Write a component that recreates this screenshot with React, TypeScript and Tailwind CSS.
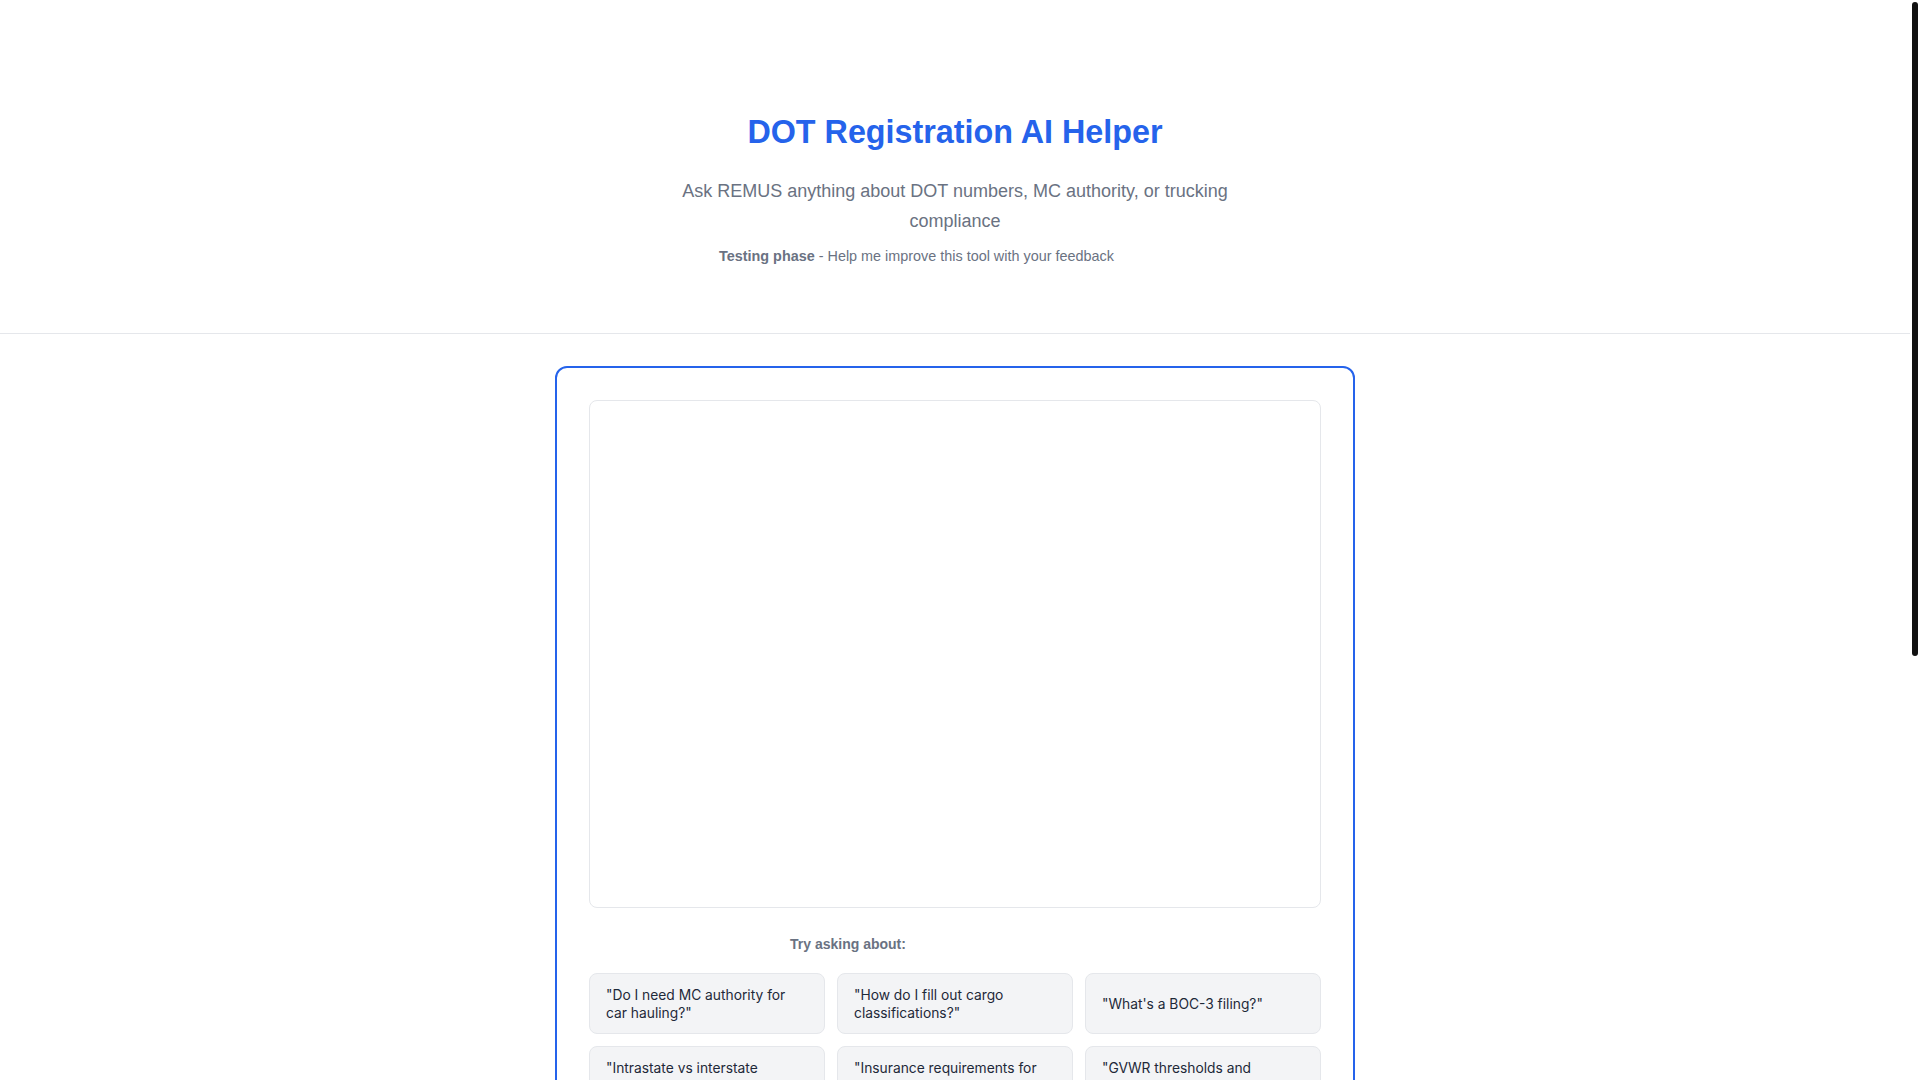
import React from "react";

const suggestions = [
  '"Do I need MC authority for car hauling?"',
  '"How do I fill out cargo classifications?"',
  "\"What's a BOC-3 filing?\"",
  '"Intrastate vs interstate hauling rules?"',
  '"Insurance requirements for car haulers?"',
  '"GVWR thresholds and requirements?"',
];

export default function App() {
  return (
    <div className="relative bg-white font-['Liberation_Sans',Arial,sans-serif]">
      <div className="mr-[10px]">
        <header className="border-b border-gray-200 pt-[112px] pb-[67px] text-center">
          <h1 className="text-[32.3px] leading-[40px] font-bold text-[#2563eb]">
            DOT Registration AI Helper
          </h1>
          <p className="mx-auto mt-[24px] max-w-xl text-lg leading-[30px] text-gray-500">
            Ask REMUS anything about DOT numbers, MC authority, or trucking compliance
          </p>
          <p className="mt-[10px] pl-[719px] text-left text-[0.9rem] leading-5 text-gray-500">
            <span className="font-bold">Testing phase</span> - Help me improve this tool with your feedback
          </p>
        </header>

        <main className="px-4 pt-8 pb-8">
          <div className="mx-auto max-w-[800px] rounded-xl border-2 border-[#2563eb] p-8">
            <div className="h-[508px] rounded-lg border border-gray-200 bg-white" />

            <p className="mt-[26px] pl-[201px] text-sm leading-5 font-bold text-gray-500">
              Try asking about:
            </p>

            <div className="mt-[19px] grid grid-cols-3 gap-3">
              {suggestions.map((s) => (
                <button
                  key={s}
                  type="button"
                  className="flex min-h-[59px] items-center rounded-lg border border-gray-200 bg-gray-100 px-4 pt-[13px] pb-[11px] text-left font-['Inter',sans-serif] text-[13.8px] leading-[17.5px] text-gray-800"
                >
                  {s}
                </button>
              ))}
            </div>

            <form className="mt-6 flex gap-3" onSubmit={(e) => e.preventDefault()}>
              <input
                className="h-[52px] flex-1 rounded-lg border border-gray-300 px-4 font-['Inter',sans-serif] text-sm text-gray-800 outline-none"
                placeholder="Ask REMUS a question..."
              />
              <button
                type="submit"
                className="h-[52px] rounded-lg bg-[#2563eb] px-6 text-sm font-bold text-white"
              >
                Send
              </button>
            </form>
            <p className="mt-3 text-center text-xs leading-5 text-gray-400">
              REMUS can make mistakes. Verify important information with FMCSA.
            </p>
          </div>
        </main>

        <footer className="flex h-[495px] flex-col items-center justify-end border-t border-gray-200 pb-10 text-sm text-gray-500">
          <p>© 2025 DOT Registration AI Helper</p>
        </footer>
      </div>

      <div className="fixed top-[2px] right-[2px] h-[654px] w-[6px] rounded-full bg-[#111111]" />
    </div>
  );
}
